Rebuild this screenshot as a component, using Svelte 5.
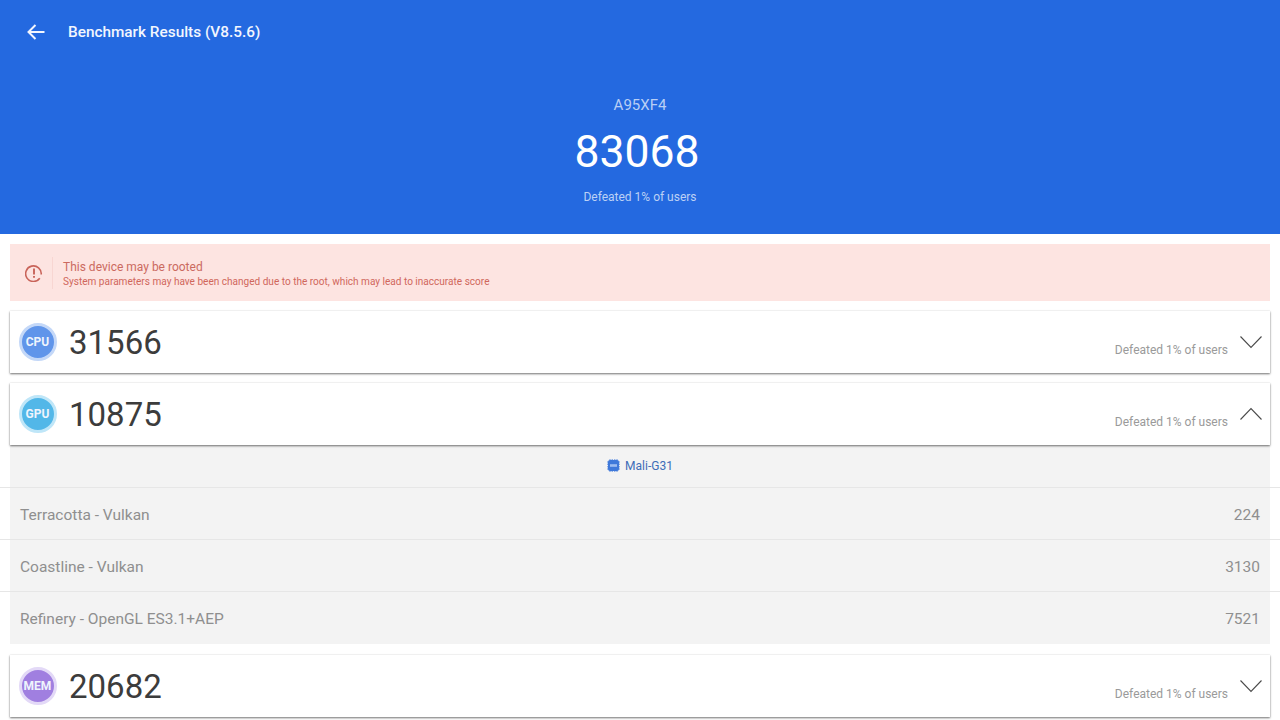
<script>
  const details = [
    { name: 'Terracotta - Vulkan', score: 224 },
    { name: 'Coastline - Vulkan', score: 3130 },
    { name: 'Refinery - OpenGL ES3.1+AEP', score: 7521 }
  ];
</script>

{#snippet card(label, tone, score, open)}
  <section class="card">
    <div class="badge {tone}">{label}</div>
    <div class="score">{score}</div>
    <div class="defeated">Defeated 1% of users</div>
    <svg class="chev" width="24" height="14" viewBox="0 0 24 14" fill="none" stroke="#4a4a4a" stroke-width="1.1">
      {#if open}
        <path d="M1.5 12.5 L12 1.5 L22.5 12.5" />
      {:else}
        <path d="M1.5 1.5 L12 12.5 L22.5 1.5" />
      {/if}
    </svg>
  </section>
{/snippet}

<div class="page">
  <header class="hero">
    <div class="topbar">
      <svg class="back" width="18" height="16" viewBox="0 0 18 16" fill="none" stroke="#f2f6fe" stroke-width="2">
        <path d="M17.5 8 H2 M8.5 1 L1.5 8 L8.5 15" />
      </svg>
      <h1>Benchmark Results (V8.5.6)</h1>
    </div>
    <div class="device">A95XF4</div>
    <div class="total">83068</div>
    <div class="sub">Defeated 1% of users</div>
  </header>

  <main class="content">
    <div class="alert">
      <div class="alert-icon">
        <svg width="18" height="18" viewBox="0 0 18 18" fill="none" stroke="#c9645a" stroke-width="1.6">
          <path d="M14.8 14.2 A7.8 7.8 0 1 1 16.2 10.5" />
          <path d="M9 4.6 V10.4 M9 12 V13.8" stroke-width="1.9" />
        </svg>
      </div>
      <div class="alert-text">
        <div class="alert-title">This device may be rooted</div>
        <div class="alert-desc">System parameters may have been changed due to the root, which may lead to inaccurate score</div>
      </div>
    </div>

    {@render card('CPU', 'cpu', '31566', false)}
    {@render card('GPU', 'gpu', '10875', true)}

    <div class="panel">
      <div class="chip-row">
        <svg width="13" height="13" viewBox="0 0 13 13">
          <rect x="1" y="1" width="11" height="11" rx="2" fill="#3f78da" />
          <path d="M3 0 V13 M5.2 0 V13 M7.8 0 V13 M10 0 V13 M0 3 H13 M0 5.2 H13 M0 7.8 H13 M0 10 H13" stroke="#3f78da" stroke-width="0.8" />
          <rect x="3" y="5.2" width="7" height="2.6" fill="#9dbcf0" />
        </svg>
        <span>Mali-G31</span>
      </div>
      {#each details as row}
        <div class="row">
          <span>{row.name}</span>
          <span>{row.score}</span>
        </div>
      {/each}
    </div>

    {@render card('MEM', 'mem', '20682', false)}
  </main>
</div>

<style>
  :global(body) {
    margin: 0;
    background: #fff;
  }
  .page {
    width: 1280px;
    height: 720px;
    overflow: hidden;
    font-family: Roboto, "Liberation Sans", sans-serif;
    background: #fff;
  }
  .hero {
    height: 234px;
    background: #2469e0;
    color: #fff;
    text-align: center;
    box-sizing: border-box;
  }
  .topbar {
    height: 64px;
    display: flex;
    align-items: center;
    padding-left: 27px;
    gap: 23px;
  }
  h1 {
    margin: 0;
    font-size: 15.35px;
    font-weight: 500;
    color: #f2f6fe;
  }
  .device {
    margin-top: 32px;
    font-size: 15px;
    line-height: 18px;
    color: #b9cff5;
  }
  .total {
    margin-top: 11px;
    padding-right: 6px;
    font-size: 44.5px;
    line-height: 54px;
    color: #fff;
  }
  .sub {
    margin-top: 10px;
    font-size: 12px;
    line-height: 16px;
    color: #bcd1f5;
  }
  .content {
    padding: 10px 10px 0;
    display: flex;
    flex-direction: column;
  }
  .alert {
    height: 57px;
    background: #fde4e1;
    display: flex;
    align-items: center;
    margin-bottom: 10px;
  }
  .alert-icon {
    width: 43px;
    height: 32px;
    margin-right: 10px;
    display: flex;
    align-items: center;
    justify-content: center;
    padding-left: 5px;
    box-sizing: border-box;
    border-right: 1px solid #f8d6d2;
  }
  .alert-text {
    padding-top: 2px;
  }
  .alert-title {
    font-size: 12px;
    line-height: 16px;
    color: #cb6a60;
  }
  .alert-desc {
    font-size: 10.05px;
    line-height: 14px;
    color: #d0675c;
  }
  .card {
    height: 62px;
    background: #fff;
    display: flex;
    align-items: center;
    box-sizing: border-box;
    padding-left: 8.5px;
    position: relative;
    box-shadow: 0 1px 2px 0 rgba(0, 0, 0, 0.55), 0 0 1px rgba(0, 0, 0, 0.12);
    margin-bottom: 10px;
  }
  .card + .panel {
    margin-top: -10px;
  }
  .badge {
    width: 32px;
    height: 32px;
    border-radius: 50%;
    display: flex;
    align-items: center;
    justify-content: center;
    color: #eef4fd;
    font-size: 12px;
    font-weight: 700;
    flex: none;
  }
  .cpu {
    background: #6095ea;
    border: 3px solid #c4d8f8;
  }
  .gpu {
    background: #52b7e8;
    border: 3px solid #bfe6f8;
  }
  .mem {
    background: #a07fe0;
    border: 3px solid #e3d9f7;
  }
  .score {
    margin-left: 12.5px;
    font-size: 33px;
    color: #3c3c3c;
  }
  .defeated {
    margin-left: auto;
    margin-right: 42px;
    margin-top: 15px;
    font-size: 12px;
    color: #9a9a9a;
  }
  .chev {
    position: absolute;
    right: 7px;
    top: 24px;
  }
  .panel {
    height: 199px;
    background: #f3f3f3;
    display: flex;
    flex-direction: column;
    margin-bottom: 11px;
  }
  .chip-row {
    height: 43px;
    padding-bottom: 2px;
    box-sizing: border-box;
    display: flex;
    align-items: center;
    justify-content: center;
    gap: 5px;
    font-size: 12px;
    color: #3e6db8;
    position: relative;
  }
  .chip-row::after,
  .row::after {
    content: "";
    position: absolute;
    left: -10px;
    right: -10px;
    bottom: 0;
    height: 1px;
    background: #e6e6e6;
  }
  .row {
    height: 52px;
    padding: 2px 10px 0;
    box-sizing: border-box;
    display: flex;
    align-items: center;
    justify-content: space-between;
    font-size: 15.5px;
    color: #8f8f8f;
    position: relative;
  }
  .row:last-child::after {
    display: none;
  }
</style>
